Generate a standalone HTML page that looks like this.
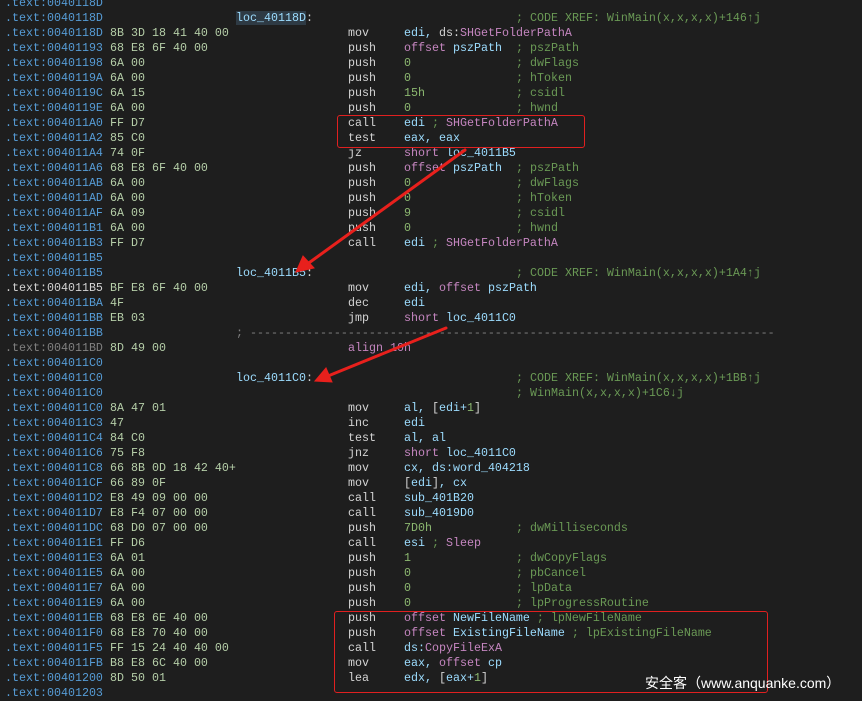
<!DOCTYPE html>
<html><head><meta charset="utf-8"><style>
html,body{margin:0;padding:0;background:#1e1e1e;width:862px;height:701px;overflow:hidden}
#w{position:absolute;left:0;top:-4px;width:862px;font-family:"Liberation Mono",monospace;font-size:11.667px}
.l{position:relative;height:15px;line-height:15px}
.l span{position:absolute;top:0;white-space:pre}
.A{left:5px;color:#569cd6}
.B{left:110px;color:#b5cea8}
.L{left:236px;color:#9cdcfe}
.M{left:348px;color:#d4d4d4}
.O{left:404px;color:#9cdcfe}
.C{left:516px;color:#6a9955}
.l span i{font-style:normal;position:static}
.k{color:#c586c0}.n{color:#8cb870}.c{color:#6a9955}.w{color:#d4d4d4}.g{color:#808080}
.hl{background:#2e3a44}
.box{position:absolute;border:1.5px solid #e02020;border-radius:3px}
#wm{position:absolute;left:645px;top:673px;color:#fff;font-family:"Liberation Sans","Noto Sans CJK SC",sans-serif;font-size:14px;white-space:nowrap}
</style></head><body>
<div id="w"><div class="l"><span class="A">.text:0040118D</span></div><div class="l"><span class="A">.text:0040118D</span><span class="L"><i class="hl">loc_40118D</i><i class="w">:</i></span><span class="C">; CODE XREF: WinMain(x,x,x,x)+146↑j</span></div><div class="l"><span class="A">.text:0040118D</span><span class="B">8B 3D 18 41 40 00</span><span class="M">mov</span><span class="O">edi, <i class="w">ds:</i><i class="k">SHGetFolderPathA</i></span></div><div class="l"><span class="A">.text:00401193</span><span class="B">68 E8 6F 40 00</span><span class="M">push</span><span class="O"><i class="k">offset</i> pszPath</span><span class="C">; pszPath</span></div><div class="l"><span class="A">.text:00401198</span><span class="B">6A 00</span><span class="M">push</span><span class="O n">0</span><span class="C">; dwFlags</span></div><div class="l"><span class="A">.text:0040119A</span><span class="B">6A 00</span><span class="M">push</span><span class="O n">0</span><span class="C">; hToken</span></div><div class="l"><span class="A">.text:0040119C</span><span class="B">6A 15</span><span class="M">push</span><span class="O n">15h</span><span class="C">; csidl</span></div><div class="l"><span class="A">.text:0040119E</span><span class="B">6A 00</span><span class="M">push</span><span class="O n">0</span><span class="C">; hwnd</span></div><div class="l"><span class="A">.text:004011A0</span><span class="B">FF D7</span><span class="M">call</span><span class="O">edi <i class="c">;</i> <i class="k">SHGetFolderPathA</i></span></div><div class="l"><span class="A">.text:004011A2</span><span class="B">85 C0</span><span class="M">test</span><span class="O">eax, eax</span></div><div class="l"><span class="A">.text:004011A4</span><span class="B">74 0F</span><span class="M">jz</span><span class="O"><i class="k">short</i> loc_4011B5</span></div><div class="l"><span class="A">.text:004011A6</span><span class="B">68 E8 6F 40 00</span><span class="M">push</span><span class="O"><i class="k">offset</i> pszPath</span><span class="C">; pszPath</span></div><div class="l"><span class="A">.text:004011AB</span><span class="B">6A 00</span><span class="M">push</span><span class="O n">0</span><span class="C">; dwFlags</span></div><div class="l"><span class="A">.text:004011AD</span><span class="B">6A 00</span><span class="M">push</span><span class="O n">0</span><span class="C">; hToken</span></div><div class="l"><span class="A">.text:004011AF</span><span class="B">6A 09</span><span class="M">push</span><span class="O n">9</span><span class="C">; csidl</span></div><div class="l"><span class="A">.text:004011B1</span><span class="B">6A 00</span><span class="M">push</span><span class="O n">0</span><span class="C">; hwnd</span></div><div class="l"><span class="A">.text:004011B3</span><span class="B">FF D7</span><span class="M">call</span><span class="O">edi <i class="c">;</i> <i class="k">SHGetFolderPathA</i></span></div><div class="l"><span class="A">.text:004011B5</span></div><div class="l"><span class="A">.text:004011B5</span><span class="L">loc_4011B5<i class="w">:</i></span><span class="C">; CODE XREF: WinMain(x,x,x,x)+1A4↑j</span></div><div class="l"><span class="A w">.text:004011B5</span><span class="B">BF E8 6F 40 00</span><span class="M">mov</span><span class="O">edi, <i class="k">offset</i> pszPath</span></div><div class="l"><span class="A">.text:004011BA</span><span class="B">4F</span><span class="M">dec</span><span class="O">edi</span></div><div class="l"><span class="A">.text:004011BB</span><span class="B">EB 03</span><span class="M">jmp</span><span class="O"><i class="k">short</i> loc_4011C0</span></div><div class="l"><span class="A">.text:004011BB</span><span class="L g">; ---------------------------------------------------------------------------</span></div><div class="l"><span class="A g">.text:004011BD</span><span class="B">8D 49 00</span><span class="M k">align 10h</span></div><div class="l"><span class="A">.text:004011C0</span></div><div class="l"><span class="A">.text:004011C0</span><span class="L">loc_4011C0<i class="w">:</i></span><span class="C">; CODE XREF: WinMain(x,x,x,x)+1BB↑j</span></div><div class="l"><span class="A">.text:004011C0</span><span class="C">; WinMain(x,x,x,x)+1C6↓j</span></div><div class="l"><span class="A">.text:004011C0</span><span class="B">8A 47 01</span><span class="M">mov</span><span class="O">al, <i class="w">[</i>edi+<i class="n">1</i><i class="w">]</i></span></div><div class="l"><span class="A">.text:004011C3</span><span class="B">47</span><span class="M">inc</span><span class="O">edi</span></div><div class="l"><span class="A">.text:004011C4</span><span class="B">84 C0</span><span class="M">test</span><span class="O">al, al</span></div><div class="l"><span class="A">.text:004011C6</span><span class="B">75 F8</span><span class="M">jnz</span><span class="O"><i class="k">short</i> loc_4011C0</span></div><div class="l"><span class="A">.text:004011C8</span><span class="B">66 8B 0D 18 42 40+</span><span class="M">mov</span><span class="O">cx, ds:word_404218</span></div><div class="l"><span class="A">.text:004011CF</span><span class="B">66 89 0F</span><span class="M">mov</span><span class="O"><i class="w">[</i>edi<i class="w">]</i>, cx</span></div><div class="l"><span class="A">.text:004011D2</span><span class="B">E8 49 09 00 00</span><span class="M">call</span><span class="O">sub_401B20</span></div><div class="l"><span class="A">.text:004011D7</span><span class="B">E8 F4 07 00 00</span><span class="M">call</span><span class="O">sub_4019D0</span></div><div class="l"><span class="A">.text:004011DC</span><span class="B">68 D0 07 00 00</span><span class="M">push</span><span class="O n">7D0h</span><span class="C">; dwMilliseconds</span></div><div class="l"><span class="A">.text:004011E1</span><span class="B">FF D6</span><span class="M">call</span><span class="O">esi <i class="c">;</i> <i class="k">Sleep</i></span></div><div class="l"><span class="A">.text:004011E3</span><span class="B">6A 01</span><span class="M">push</span><span class="O n">1</span><span class="C">; dwCopyFlags</span></div><div class="l"><span class="A">.text:004011E5</span><span class="B">6A 00</span><span class="M">push</span><span class="O n">0</span><span class="C">; pbCancel</span></div><div class="l"><span class="A">.text:004011E7</span><span class="B">6A 00</span><span class="M">push</span><span class="O n">0</span><span class="C">; lpData</span></div><div class="l"><span class="A">.text:004011E9</span><span class="B">6A 00</span><span class="M">push</span><span class="O n">0</span><span class="C">; lpProgressRoutine</span></div><div class="l"><span class="A">.text:004011EB</span><span class="B">68 E8 6E 40 00</span><span class="M">push</span><span class="O"><i class="k">offset</i> NewFileName <i class="c">; lpNewFileName</i></span></div><div class="l"><span class="A">.text:004011F0</span><span class="B">68 E8 70 40 00</span><span class="M">push</span><span class="O"><i class="k">offset</i> ExistingFileName <i class="c">; lpExistingFileName</i></span></div><div class="l"><span class="A">.text:004011F5</span><span class="B">FF 15 24 40 40 00</span><span class="M">call</span><span class="O">ds:<i class="k">CopyFileExA</i></span></div><div class="l"><span class="A">.text:004011FB</span><span class="B">B8 E8 6C 40 00</span><span class="M">mov</span><span class="O">eax, <i class="k">offset</i> cp</span></div><div class="l"><span class="A">.text:00401200</span><span class="B">8D 50 01</span><span class="M">lea</span><span class="O">edx, <i class="w">[</i>eax+<i class="n">1</i><i class="w">]</i></span></div><div class="l"><span class="A">.text:00401203</span></div></div>
<div class="box" style="left:337px;top:115px;width:246px;height:31px"></div>
<div class="box" style="left:334px;top:611px;width:432px;height:80px"></div>
<svg style="position:absolute;left:0;top:0" width="862" height="701">
<g stroke="#e8201c" stroke-width="3" stroke-linecap="round" fill="#e8201c">
<line x1="465" y1="150" x2="306" y2="265"/>
<polygon points="296,272 303,256 314,268" stroke-width="1"/>
<line x1="446" y1="328" x2="328" y2="376"/>
<polygon points="315,381 326,368 332,382" stroke-width="1"/>
</g>
</svg>
<div id="wm">安全客（www.anquanke.com）</div>
</body></html>
